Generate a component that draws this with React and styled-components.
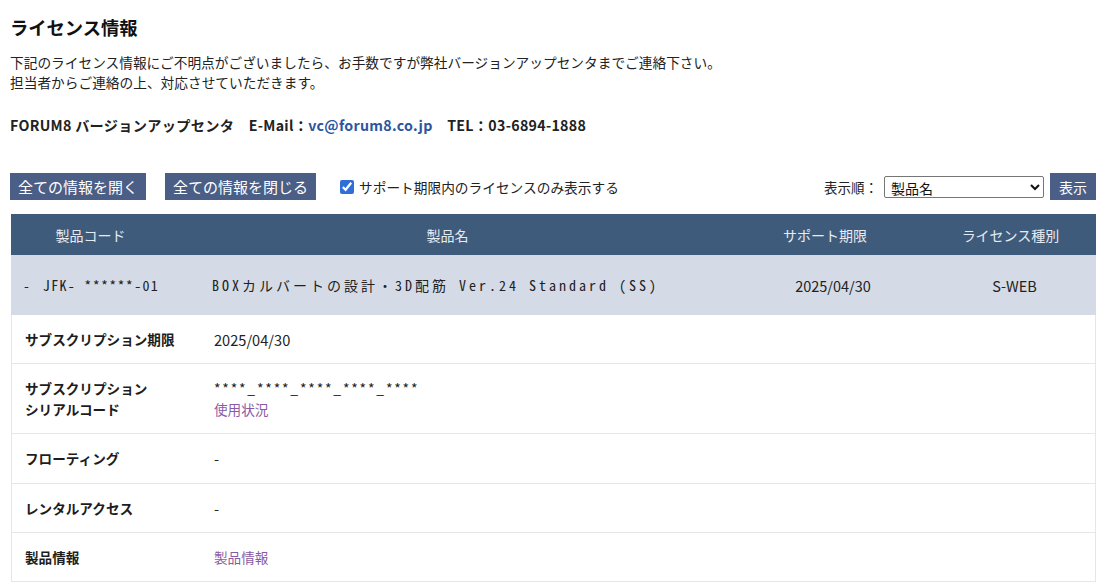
import styled, { createGlobalStyle } from "styled-components";

const Global = createGlobalStyle`
  body {
    margin: 0;
    background: #fff;
    font-family: "Noto Sans CJK JP", sans-serif;
    color: #222;
  }
`;

const Page = styled.div`
  padding: 0 2px 0 10px;
  font-family: "Noto Sans CJK JP", sans-serif;
`;

const Title = styled.h1`
  margin: 0;
  padding-top: 16px;
  font-size: 18.3px;
  line-height: 22px;
  font-weight: 700;
  color: #111;
`;

const Lead = styled.p`
  margin: 15px 0 0;
  font-size: 13.7px;
  line-height: 19.5px;
  color: #222;
`;

const Contact = styled.p`
  margin: 23px 0 0;
  font-size: 14.2px;
  line-height: 20px;
  font-weight: 700;
  letter-spacing: 0.3px;
  color: #222;
  white-space: pre;
`;

const Mail = styled.a`
  color: #2b569f;
  text-decoration: none;
`;

const Toolbar = styled.div`
  margin-top: 38px;
  display: flex;
  align-items: center;
  height: 27px;
`;

const Button = styled.button`
  height: 27px;
  padding: 0 ${(p) => (p.$small ? 9 : 8)}px;
  border: none;
  background: #4b5e86;
  color: #fff;
  font-family: "Noto Sans CJK JP", sans-serif;
  font-size: ${(p) => (p.$small ? 14 : 15)}px;
  margin-right: ${(p) => p.$gap || 0}px;
  cursor: pointer;
`;

const CheckLabel = styled.label`
  display: flex;
  align-items: center;
  gap: 5px;
  font-size: 13.7px;
  color: #222;
  margin-left: 6px;
`;

const Check = styled.input`
  width: 14px;
  height: 14px;
  margin: 0;
  accent-color: #2f6fd6;
`;

const Sort = styled.div`
  margin-left: auto;
  display: flex;
  align-items: center;
  font-size: 13.5px;
  gap: 6px;
`;

const Select = styled.select`
  width: 160px;
  height: 22px;
  font-family: "Noto Sans CJK JP", sans-serif;
  font-size: 14px;
  border: 1px solid #767676;
  border-radius: 2px;
  background: #fff;
  color: #111;
  padding: 0 2px;
`;

const Table = styled.div`
  margin-top: 14px;
  margin-left: 1px;
`;

const HeadRow = styled.div`
  display: grid;
  grid-template-columns: 159px 555px 200px 1fr;
  height: 41px;
  background: #3f5b7b;
  color: #e6ebf2;
  font-size: 14px;
  align-items: center;
  text-align: center;
`;

const ProductRow = styled.div`
  display: grid;
  grid-template-columns: 201px 521px 200px 1fr;
  height: 60px;
  background: #d4dbe6;
  align-items: center;
  font-size: 13.5px;
  color: #222;
`;

const Code = styled.div`
  padding-left: 13px;
  display: flex;
  align-items: center;
  gap: 14px;
`;

const Toggle = styled.span`
  font-size: 14px;
`;

const Mono = styled.span`
  font-family: "Noto Sans Mono CJK JP", "Liberation Mono", "Noto Sans CJK JP", monospace;
  font-size: 14px;
  letter-spacing: ${(p) => p.$ls || 0}px;
`;

const Cell = styled.div`
  text-align: center;
  font-size: 14.5px;
`;

const DetailRow = styled.div`
  display: grid;
  grid-template-columns: 202px 1fr;
  align-items: center;
  height: ${(p) => p.$h}px;
  border: 1px solid #e6e6e6;
  border-top: none;
  font-size: 13.6px;
`;

const Label = styled.div`
  padding-left: 13px;
  font-weight: 700;
  line-height: 21px;
  color: #1d1d1d;
  white-space: pre-line;
`;

const Value = styled.div`
  line-height: 21px;
  font-size: 14.6px;
  color: #222;
`;

const Serial = styled.div`
  font-size: 14px;
  letter-spacing: 1.8px;
`;

const Link = styled.a`
  display: block;
  color: #8a5aa6;
  text-decoration: none;
  font-size: 13.6px;
`;

const details = [
  { label: "サブスクリプション期限", value: "2025/04/30", h: 48 },
  { label: "サブスクリプション\nシリアルコード", serial: "****_****_****_****_****", h: 69 },
  { label: "フローティング", value: "-", h: 49 },
  { label: "レンタルアクセス", value: "-", h: 48 },
  { label: "製品情報", link: "製品情報", h: 48 },
];

export default function App() {
  return (
    <Page>
      <Global />
      <Title>ライセンス情報</Title>
      <Lead>
        下記のライセンス情報にご不明点がございましたら、お手数ですが弊社バージョンアップセンタまでご連絡下さい。
        <br />
        担当者からご連絡の上、対応させていただきます。
      </Lead>
      <Contact>
        FORUM8 バージョンアップセンタ　E-Mail：<Mail href="#">vc@forum8.co.jp</Mail>　TEL：03-6894-1888
      </Contact>
      <Toolbar>
        <Button $gap={19}>全ての情報を開く</Button>
        <Button $gap={18}>全ての情報を閉じる</Button>
        <CheckLabel>
          <Check type="checkbox" defaultChecked />
          サポート期限内のライセンスのみ表示する
        </CheckLabel>
        <Sort>
          表示順：
          <Select defaultValue="name">
            <option value="name">製品名</option>
            <option value="code">製品コード</option>
            <option value="date">サポート期限</option>
          </Select>
          <Button $small>表示</Button>
        </Sort>
      </Toolbar>
      <Table>
        <HeadRow>
          <div>製品コード</div>
          <div>製品名</div>
          <div>サポート期限</div>
          <div>ライセンス種別</div>
        </HeadRow>
        <ProductRow>
          <Code>
            <Toggle>-</Toggle>
            <Mono $ls={1.3}>JFK- ******-01</Mono>
          </Code>
          <Mono $ls={3}>BOXカルバートの設計・3D配筋 Ver.24 Standard (SS)</Mono>
          <Cell>2025/04/30</Cell>
          <Cell>S-WEB</Cell>
        </ProductRow>
        {details.map((d) => (
          <DetailRow key={d.label} $h={d.h}>
            <Label>{d.label}</Label>
            <Value>
              {d.value}
              {d.serial && <Serial>{d.serial}</Serial>}
              {d.serial && <Link href="#">使用状況</Link>}
              {d.link && <Link href="#">{d.link}</Link>}
            </Value>
          </DetailRow>
        ))}
      </Table>
    </Page>
  );
}
